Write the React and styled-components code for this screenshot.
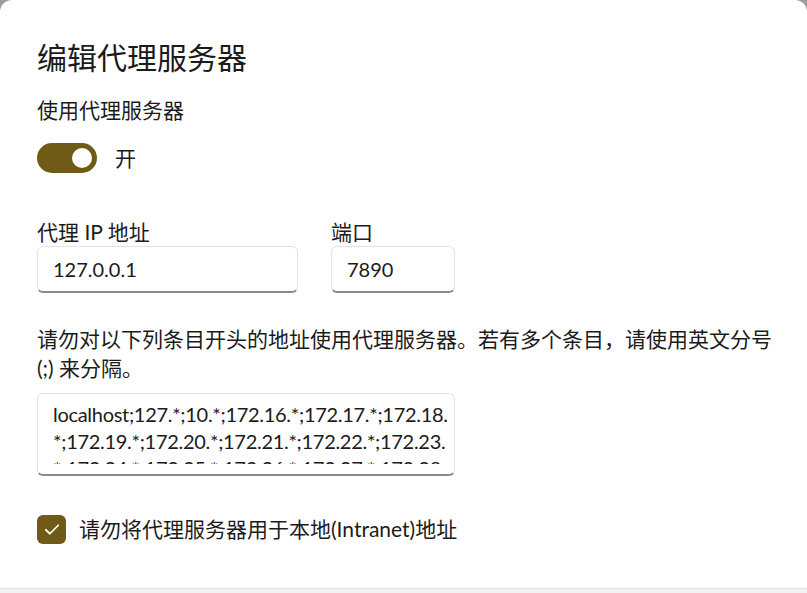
import styled, { createGlobalStyle } from "styled-components";

const GlobalStyle = createGlobalStyle`
  html, body {
    margin: 0;
    padding: 0;
    background: #9c9c9c;
  }
  body {
    font-family: "Lato", "Noto Sans CJK SC", sans-serif;
    color: #1b1b1b;
  }
`;

const BYPASS_LINES = [
  "localhost;127.*;10.*;172.16.*;172.17.*;172.18.",
  "*;172.19.*;172.20.*;172.21.*;172.22.*;172.23.",
  "*;172.24.*;172.25.*;172.26.*;172.27.*;172.28.",
];

export default function App() {
  return (
    <>
      <GlobalStyle />
      <Dialog>
        <Content>
          <Title>编辑代理服务器</Title>
          <Caption>使用代理服务器</Caption>
          <ToggleRow>
            <Toggle on>
              <Knob />
            </Toggle>
            <span>开</span>
          </ToggleRow>

          <Fields>
            <Field width="261px">
              <Label>代理 IP 地址</Label>
              <Input>127.0.0.1</Input>
            </Field>
            <Field width="124px">
              <Label>端口</Label>
              <Input>7890</Input>
            </Field>
          </Fields>

          <Description>
            请勿对以下列条目开头的地址使用代理服务器。若有多个条目，请使用英文分号
            (;) 来分隔。
          </Description>

          <TextArea>
            <Scroller>
              {BYPASS_LINES.map((line, i) => (
                <div key={i}>{line}</div>
              ))}
            </Scroller>
          </TextArea>

          <CheckRow>
            <CheckBox>
              <svg width="20" height="20" viewBox="0 0 16 16" fill="none">
                <path
                  d="M3 8.6 L6.3 11.8 L13 5"
                  stroke="#fff"
                  strokeWidth="1.4"
                  strokeLinecap="round"
                  strokeLinejoin="round"
                />
              </svg>
            </CheckBox>
            <span>请勿将代理服务器用于本地(Intranet)地址</span>
          </CheckRow>
        </Content>
        <Footer />
      </Dialog>
    </>
  );
}

const Dialog = styled.div`
  height: 593px;
  background: #ffffff;
  border-radius: 12px 12px 0 0;
  display: flex;
  flex-direction: column;
  overflow: hidden;
`;

const Content = styled.div`
  flex: 1;
  padding: 37px 37px 0;
  display: flex;
  flex-direction: column;
  align-items: flex-start;
  font-size: 21px;
`;

const Title = styled.div`
  font-size: 30px;
  line-height: 40px;
  font-weight: 400;
`;

const Caption = styled.div`
  margin-top: 18px;
  line-height: 30px;
`;

const ToggleRow = styled.div`
  margin-top: 18px;
  display: flex;
  align-items: center;
  gap: 18px;
  line-height: 30px;
`;

const Toggle = styled.div`
  width: 60px;
  height: 30px;
  border-radius: 15px;
  background: ${(p) => (p.on ? "#6f5a17" : "transparent")};
  display: flex;
  align-items: center;
  justify-content: ${(p) => (p.on ? "flex-end" : "flex-start")};
  padding: 0 5px;
  box-sizing: border-box;
`;

const Knob = styled.div`
  width: 20px;
  height: 20px;
  border-radius: 50%;
  background: #ffffff;
`;

const Fields = styled.div`
  margin-top: 45px;
  display: flex;
  gap: 33px;
`;

const Field = styled.div`
  width: ${(p) => p.width};
  display: flex;
  flex-direction: column;
`;

const Label = styled.div`
  line-height: 28px;
`;

const Input = styled.div`
  height: 47px;
  box-sizing: border-box;
  border: 1px solid #e3e3e3;
  border-bottom: 2px solid #8a8a8a;
  border-radius: 6px;
  padding: 0 15px;
  display: flex;
  align-items: center;
  background: #fff;
  font-size: 20px;
`;

const Description = styled.div`
  margin-top: 31px;
  line-height: 29px;
  width: 750px;
`;

const TextArea = styled.div`
  margin-top: 11px;
  width: 418px;
  height: 83px;
  box-sizing: border-box;
  border: 1px solid #e3e3e3;
  border-bottom: 2px solid #8a8a8a;
  border-radius: 6px;
  padding: 7px 3px 10px 15px;
  background: #fff;
`;

const Scroller = styled.div`
  height: 100%;
  overflow: hidden;
  font-size: 20px;
  letter-spacing: -0.3px;
  line-height: 27px;
  white-space: nowrap;
`;

const CheckRow = styled.div`
  margin-top: 38px;
  display: flex;
  align-items: center;
  gap: 13px;
  line-height: 30px;
`;

const CheckBox = styled.div`
  width: 29px;
  height: 29px;
  border-radius: 6px;
  background: #6f5a17;
  display: flex;
  align-items: center;
  justify-content: center;
`;

const Footer = styled.div`
  height: 4px;
  background: #f3f3f3;
  border-top: 1px solid #e5e5e5;
`;
